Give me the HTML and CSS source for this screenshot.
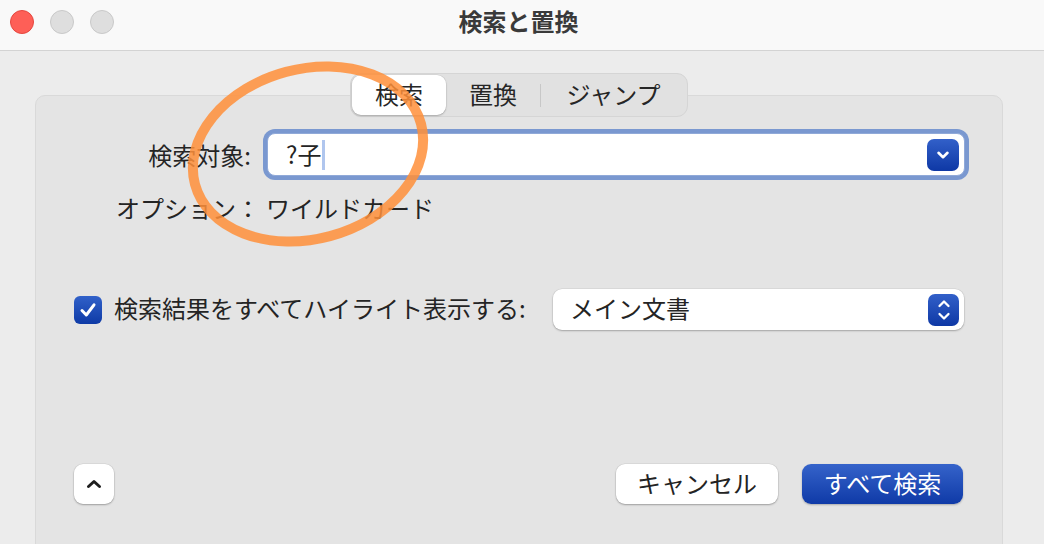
FILE: index.html
```html
<!DOCTYPE html>
<html lang="ja">
<head>
<meta charset="utf-8">
<title>検索と置換</title>
<link rel="stylesheet" href="styles.css">
</head>
<body>
<div class="window">
  <header class="titlebar">
    <div class="lights">
      <span class="light red"></span>
      <span class="light gray"></span>
      <span class="light gray"></span>
    </div>
    <h1 class="title">検索と置換</h1>
    <div class="spacer"></div>
  </header>
  <main class="content">
    <section class="panel">
      <div class="seg">
        <span class="seg-item active">検索</span>
        <span class="seg-item">置換</span>
        <span class="seg-sep"></span>
        <span class="seg-item wide">ジャンプ</span>
      </div>
      <div class="field-row">
        <label class="field-label">検索対象:</label>
        <div class="combo">
          <span class="combo-text">?子</span><span class="caret"></span>
          <span class="combo-btn">
            <svg width="14" height="10" viewBox="0 0 14 10"><path d="M2.5 2.8 L7 7.2 L11.5 2.8" fill="none" stroke="#fff" stroke-width="2.6" stroke-linecap="round" stroke-linejoin="round"/></svg>
          </span>
        </div>
      </div>
      <div class="options-row">
        <span>オプション：</span><span class="opt-value">ワイルドカード</span>
      </div>
      <div class="check-row">
        <span class="checkbox">
          <svg width="20" height="18" viewBox="0 0 20 18"><path d="M4 9.5 L8.3 14 L16 3.8" fill="none" stroke="#fff" stroke-width="3" stroke-linecap="round" stroke-linejoin="round"/></svg>
        </span>
        <span class="check-label">検索結果をすべてハイライト表示する:</span>
        <div class="popup">
          <span class="popup-text">メイン文書</span>
          <span class="stepper">
            <svg width="16" height="26" viewBox="0 0 16 26"><path d="M3.5 9 L8 4.5 L12.5 9 M3.5 17 L8 21.5 L12.5 17" fill="none" stroke="#fff" stroke-width="2.3" stroke-linecap="round" stroke-linejoin="round"/></svg>
          </span>
        </div>
      </div>
      <div class="bottom-row">
        <button class="btn icon-btn">
          <svg width="16" height="12" viewBox="0 0 16 12"><path d="M2.5 8.5 L8 3.5 L13.5 8.5" fill="none" stroke="#1e1e1e" stroke-width="3" stroke-linecap="round" stroke-linejoin="round"/></svg>
        </button>
        <div class="actions">
          <button class="btn cancel"><span class="btn-text">キャンセル</span></button>
          <button class="btn primary"><span class="btn-text">すべて検索</span></button>
        </div>
      </div>
    </section>
  </main>
  <svg class="annotation" width="1044" height="544" viewBox="0 0 1044 544">
    <ellipse cx="308" cy="154" rx="117" ry="85" transform="rotate(-15 308 154)" fill="none" stroke="#ff8f3a" stroke-opacity="0.85" stroke-width="10"/>
  </svg>
</div>
</body>
</html>
```

FILE: styles.css
```css
* { box-sizing: border-box; }

html, body {
  margin: 0;
  padding: 0;
  width: 1044px;
  height: 544px;
  overflow: hidden;
}

body {
  font-family: "Noto Sans CJK JP", "Noto Sans", sans-serif;
  color: #242424;
  background: #ececec;
}

.window {
  position: relative;
  width: 1044px;
  height: 544px;
  overflow: hidden;
  background: #ececec;
}

.titlebar {
  height: 51px;
  background: #f9f9f9;
  border-bottom: 1px solid #d3d3d3;
  display: grid;
  grid-template-columns: 1fr auto 1fr;
  align-items: center;
}

.lights {
  display: flex;
  gap: 16px;
  padding-left: 10px;
  margin-top: -6px;
}

.light {
  width: 24px;
  height: 24px;
  border-radius: 50%;
}

.light.red {
  background: #fe5f57;
  border: 1px solid #e5473f;
}

.light.gray {
  background: #dedede;
  border: 1px solid #c9c9c9;
}

.title {
  margin: -9px 7px 0 0;
  font-size: 24px;
  font-weight: 700;
  color: #3a3a3a;
}

.content {
  padding: 44px 41px 0 35px;
}

.panel {
  height: 470px;
  background: #e4e4e4;
  border: 1px solid #d9d9d9;
  border-radius: 10px;
}

.seg {
  width: 338px;
  height: 44px;
  margin: -23px auto 0;
  padding: 1px;
  display: flex;
  align-items: center;
  background: #e1e1e1;
  border: 1px solid #d5d5d5;
  border-radius: 11px;
  font-size: 24px;
}

.seg-item {
  width: 94px;
  height: 40px;
  display: flex;
  align-items: center;
  justify-content: center;
  color: #262626;
  line-height: 1;
  padding-bottom: 2px;
}

.seg-item.wide { width: 145px; }

.seg-item.active {
  background: #ffffff;
  border-radius: 9px;
  box-shadow: 0 1px 2px rgba(0,0,0,0.22), 0 0 0 0.5px rgba(0,0,0,0.08);
}

.seg-sep {
  width: 1px;
  height: 23px;
  background: #c7c7c7;
}

.field-row {
  margin-top: 16px;
  display: flex;
  align-items: center;
  height: 43px;
}

.field-label {
  width: 215px;
  text-align: right;
  font-size: 24px;
  line-height: 1;
  margin-right: 16px;
}

.combo {
  width: 698px;
  height: 43px;
  background: #fff;
  border: 1px solid #90a9d8;
  border-radius: 8px;
  box-shadow: 0 0 0 4px #7a98d0;
  display: flex;
  align-items: center;
  padding: 0 5px 0 18px;
}

.combo-text {
  font-size: 24px;
  line-height: 1;
  margin-top: -1px;
}

.caret {
  width: 2.5px;
  height: 30px;
  background: #b0c6ee;
  margin-left: 1px;
}

.combo-btn {
  margin-left: auto;
  width: 32px;
  height: 32px;
  border-radius: 7px;
  background: linear-gradient(#3260c9, #0e38a5);
  display: flex;
  align-items: center;
  justify-content: center;
}

.options-row {
  margin-top: 17px;
  height: 30px;
  padding-left: 80px;
  font-size: 24px;
  line-height: 30px;
  display: flex;
}

.opt-value { margin-left: 6px; }

.check-row {
  margin-top: 66px;
  height: 41px;
  padding: 0 38px;
  display: flex;
  align-items: center;
}

.checkbox {
  width: 28px;
  height: 28px;
  border-radius: 6px;
  background: linear-gradient(#3161c9, #0e3aa6);
  display: flex;
  align-items: center;
  justify-content: center;
  flex: none;
}

.check-label {
  flex: 1;
  margin-left: 12px;
  font-size: 24px;
  line-height: 1;
  margin-top: -3px;
}

.popup {
  flex: none;
  width: 411px;
  height: 41px;
  background: #fff;
  border-radius: 9px;
  box-shadow: 0 1px 2px rgba(0,0,0,0.25), 0 0 0 0.5px rgba(0,0,0,0.08);
  display: flex;
  align-items: center;
  padding: 0 5px 0 17px;
}

.popup-text {
  font-size: 24px;
  line-height: 1;
  margin-top: -3px;
}

.stepper {
  margin-left: auto;
  width: 31px;
  height: 32px;
  border-radius: 7px;
  background: linear-gradient(#3260c9, #0e38a5);
  display: flex;
  align-items: center;
  justify-content: center;
}

.bottom-row {
  margin-top: 134px;
  padding: 0 39px 0 38px;
  display: flex;
  align-items: center;
  justify-content: space-between;
}

.actions {
  display: flex;
  gap: 24px;
}

.btn {
  height: 40px;
  border: none;
  border-radius: 9px;
  font-family: inherit;
  font-size: 24px;
  line-height: 1;
  padding: 0;
  display: flex;
  align-items: center;
  justify-content: center;
  background: #fff;
  color: #232323;
  box-shadow: 0 1px 2px rgba(0,0,0,0.28), 0 0 0 0.5px rgba(0,0,0,0.08);
}

.btn-text { margin-top: -3px; }

.icon-btn { width: 40px; }

.cancel { width: 162px; }

.primary {
  width: 161px;
  color: #fff;
  background: linear-gradient(#3563ca, #0f3aa7);
  box-shadow: 0 1px 2px rgba(0,0,0,0.25);
}

.annotation {
  position: absolute;
  left: 0;
  top: 0;
  pointer-events: none;
}
```
